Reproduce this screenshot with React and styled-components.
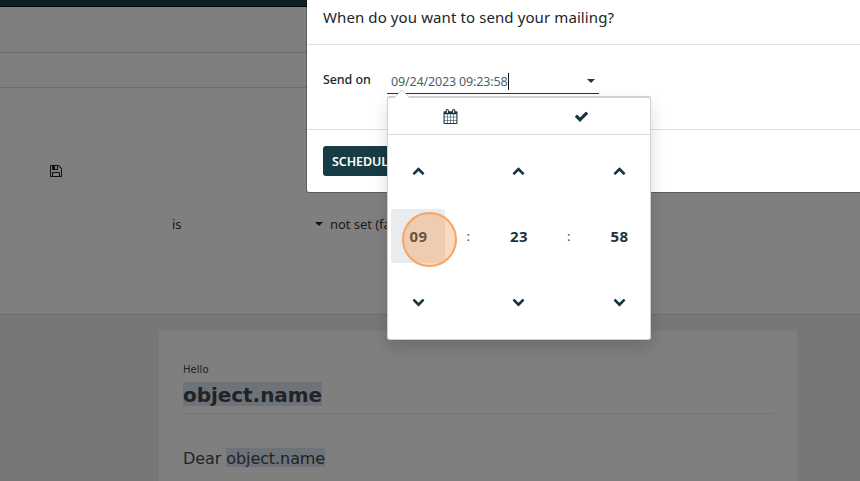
import React from "react";
import styled, { createGlobalStyle } from "styled-components";

const Global = createGlobalStyle`
  * { box-sizing: border-box; }
  body {
    margin: 0;
    overflow: hidden;
    background: #fff;
    font-family: "Noto Sans", "Open Sans", sans-serif;
    font-size: 13px;
    color: #1e262c;
  }
`;

const Stage = styled.div`
  position: relative;
  width: 860px;
  height: 481px;
  overflow: hidden;
`;

const Page = styled.div`
  display: flex;
  flex-direction: column;
  height: 481px;
`;

const Navbar = styled.header`
  flex: 0 0 7px;
  background: #1b4045;
  border-bottom: 1px solid #04080a;
`;

const Strip = styled.div`
  flex: 0 0 ${(p) => p.$height}px;
  border-bottom: 1px solid #dcdcde;
`;

const Form = styled.section`
  flex: 0 0 227px;
  padding-top: 76px;
  border-bottom: 1px solid #d8dadd;
`;

const SaveRow = styled.div`
  display: flex;
  height: 14px;
  padding-left: 49px;
`;

const RuleRow = styled.div`
  display: flex;
  align-items: center;
  height: 20px;
  margin-top: 36px;
  padding-left: 172px;
  letter-spacing: -0.05px;
  color: #343a40;
`;

const Operator = styled.span`
  width: 143px;
`;

const RuleValue = styled.span`
  margin-left: 7px;
  white-space: nowrap;
`;

const Caret = styled.span`
  border: 4px solid transparent;
  border-top: 4px solid ${(p) => p.$color};
  border-bottom: 0;
`;

const Canvas = styled.section`
  flex: 1;
  padding: 16px 63px 0 159px;
  background: #efefef;
`;

const Mail = styled.article`
  display: flex;
  flex-direction: column;
  height: 150px;
  padding: 31px 22px 0 24px;
  background: #fff;
  font-family: "DejaVu Sans", sans-serif;
  color: #454748;
`;

const Hello = styled.div`
  height: 20px;
  line-height: 15px;
  font-size: 10px;
  letter-spacing: 0.05px;
`;

const MailTitle = styled.div`
  height: 32px;
  border-bottom: 1px solid #ececec;
  font-size: 20px;
  font-weight: 700;
  line-height: 24px;
`;

const Token = styled.span`
  display: inline-block;
  height: ${(p) => p.$height}px;
  line-height: ${(p) => p.$height + 2}px;
  background: #dae6f2;
  letter-spacing: ${(p) => p.$spacing}px;
  vertical-align: top;
`;

const Greeting = styled.div`
  margin-top: 34px;
  font-size: 16px;
  line-height: 21px;
  letter-spacing: -0.08px;
  white-space: pre;
`;

const Backdrop = styled.div`
  position: absolute;
  inset: 0;
  background: rgba(0, 0, 0, 0.5);
`;

const Dialog = styled.div`
  position: absolute;
  top: 0;
  left: 306px;
  display: flex;
  flex-direction: column;
  width: 560px;
  height: 193px;
  overflow: hidden;
  background: #fff;
  background-clip: padding-box;
  border: 1px solid rgba(0, 0, 0, 0.25);
  border-top: 0;
  border-radius: 0 0 0 3px;
`;

const DialogHeader = styled.h4`
  flex: 0 0 45px;
  margin: 0;
  padding: 6px 16px 0;
  border-bottom: 1px solid #dee2e6;
  font-size: 15px;
  font-weight: 450;
  line-height: 22px;
  letter-spacing: 0.1px;
  color: #212529;
`;

const DialogBody = styled.div`
  display: flex;
  flex: 0 0 84px;
  padding: 24px 16px 0;
`;

const FieldLabel = styled.label`
  width: 64px;
  line-height: 21px;
  font-size: 12.5px;
  font-weight: 500;
  letter-spacing: -0.1px;
`;

const DateField = styled.div`
  display: flex;
  align-items: center;
  width: 212px;
  height: 25px;
  padding: 0 4px;
  border-bottom: 1px solid #1b3a44;
  color: #4b626c;
  font-size: 12.5px;
`;

const DateValue = styled.span`
  letter-spacing: -0.15px;
  white-space: nowrap;
`;

const Cursor = styled.span`
  width: 1px;
  height: 17px;
  margin-right: auto;
  background: #111;
`;

const DialogFooter = styled.div`
  flex: 1;
  padding: 16px;
  border-top: 1px solid #dee2e6;
`;

const Schedule = styled.button`
  width: 96px;
  height: 30px;
  padding: 0 9px;
  border: 0;
  border-radius: 3px;
  background: #173c45;
  color: #fff;
  font: 600 12.5px "Noto Sans", sans-serif;
  letter-spacing: -0.1px;
  text-align: left;
`;

const Picker = styled.div`
  position: absolute;
  top: 96px;
  left: 387px;
  width: 264px;
  height: 244px;
  background: #fff;
  border: 1px solid #ced1d4;
  border-top-width: 2px;
  border-radius: 3px;
  box-shadow: 0 8px 16px rgba(0, 0, 0, 0.15);
`;

const Arrow = styled.svg`
  position: absolute;
  top: -8px;
  left: 7px;
`;

const PickerTools = styled.div`
  display: grid;
  grid-template-columns: 125px 137px;
  align-items: center;
  justify-items: center;
  height: 37px;
  padding-top: 1px;
  border-bottom: 1px solid #d8dadd;
`;

const TimeGrid = styled.div`
  display: grid;
  grid-template-columns: 54px 46.5px 54px 46.5px 54px;
  grid-template-rows: repeat(3, 54px);
  row-gap: 11.5px;
  padding: 8px 0 0 3px;
`;

const Cell = styled.div`
  display: flex;
  align-items: center;
  justify-content: center;
  border-radius: 3px;
  background: ${(p) => (p.$active ? "#e9ecef" : "transparent")};
  padding-left: ${(p) => (p.$active === undefined ? 0 : 1)}px;
  font-size: ${(p) => (p.$plain ? 13 : 15)}px;
  letter-spacing: ${(p) => (p.$plain ? 0 : 0.3)}px;
  font-weight: ${(p) => (p.$plain ? 400 : 700)};
  color: ${(p) => (p.$plain ? "#495057" : "#173540")};
`;

const Highlight = styled.div`
  position: absolute;
  top: 212px;
  left: 402px;
  width: 55px;
  height: 55px;
  border: 2px solid #f8a462;
  border-radius: 50%;
  background: rgba(249, 145, 67, 0.35);
`;

const paths = {
  down: "M1683 808l-742 741q-19 19-45 19t-45-19l-742-741q-19-19-19-45.500t19-45.500l166-165q19-19 45-19t45 19l531 531 531-531q19-19 45-19t45 19l166 165q19 19 19 45.500t-19 45.500z",
  up: "M1683 1331l-166 165q-19 19-45 19t-45-19l-531-531-531 531q-19 19-45 19t-45-19l-166-165q-19-19-19-45.500t19-45.500l742-741q19-19 45-19t45 19l742 741q19 19 19 45.500t-19 45.500z",
  check:
    "M1671 566q0 40-28 68l-724 724-136 136q-28 28-68 28t-68-28l-136-136-362-362q-28-28-28-68t28-68l136-136q28-28 68-28t68 28l294 295 656-657q28-28 68-28t68 28l136 136q28 28 28 68z",
  calendar:
    "M192 1664h288v-288h-288v288zm352 0h320v-288h-320v288zm-352-352h288v-320h-288v320zm352 0h320v-320h-320v320zm-352-384h288v-288h-288v288zm736 736h320v-288h-320v288zm-384-736h320v-288h-320v288zm768 736h288v-288h-288v288zm-384-352h320v-320h-320v320zm-352-864v-288q0-13-9.500-22.500t-22.500-9.500h-64q-13 0-22.500 9.500t-9.500 22.500v288q0 13 9.500 22.500t22.500 9.500h64q13 0 22.500-9.500t9.500-22.500zm736 864h288v-320h-288v320zm-384-384h320v-288h-320v288zm384 0h288v-288h-288v288zm32-480v-288q0-13-9.500-22.500t-22.500-9.500h-64q-13 0-22.500 9.500t-9.500 22.500v288q0 13 9.500 22.500t22.500 9.500h64q13 0 22.500-9.500t9.500-22.500zm384-64v1280q0 52-38 90t-90 38h-1408q-52 0-90-38t-38-90v-1280q0-52 38-90t90-38h128v-96q0-66 47-113t113-47h64q66 0 113 47t47 113v96h384v-96q0-66 47-113t113-47h64q66 0 113 47t47 113v96h128q52 0 90 38t38 90z",
  floppy:
    "M512 1536h768v-384h-768v384zm896 0h128v-896q0-14-10-38.500t-20-34.500l-281-281q-10-10-34-20t-39-10v416q0 40-28 68t-68 28h-576q-40 0-68-28t-28-68v-416h-128v1280h128v-416q0-40 28-68t68-28h832q40 0 68 28t28 68v416zm-384-928v-320q0-13-9.500-22.500t-22.500-9.500h-192q-13 0-22.500 9.500t-9.500 22.500v320q0 13 9.500 22.500t22.500 9.500h192q13 0 22.500-9.500t9.500-22.500zm640 32v928q0 40-28 68t-68 28h-1344q-40 0-68-28t-28-68v-1344q0-40 28-68t68-28h928q40 0 88 20t76 48l280 280q28 28 48 76t20 88z",
};

const Icon = ({ name, size = 13, color = "#173540" }) => (
  <svg width={size} height={size} viewBox="0 0 1792 1792" fill={color}>
    <path d={paths[name]} />
  </svg>
);

const TimeRow = ({ items, plain }) =>
  items.map((item, i) => (
    <React.Fragment key={i}>
      {i > 0 && <Cell $plain>{plain ? ":" : ""}</Cell>}
      {item}
    </React.Fragment>
  ));

export default function App() {
  const arrows = (name) => [0, 1, 2].map((n) => (
    <Cell key={n}><Icon name={name} /></Cell>
  ));
  return (
    <Stage>
      <Global />
      <Page>
        <Navbar />
        <Strip $height={46} />
        <Strip $height={35} />
        <Form>
          <SaveRow><Icon name="floppy" size={14} color="#212529" /></SaveRow>
          <RuleRow>
            <Operator>is</Operator>
            <Caret $color="#212529" />
            <RuleValue>not set (false)</RuleValue>
          </RuleRow>
        </Form>
        <Canvas>
          <Mail>
            <Hello>Hello</Hello>
            <MailTitle><Token $height={24} $spacing={-0.05}>object.name</Token></MailTitle>
            <Greeting>Dear <Token $height={19} $spacing={-0.08}>object.name</Token></Greeting>
          </Mail>
        </Canvas>
      </Page>
      <Backdrop />
      <Dialog>
        <DialogHeader>When do you want to send your mailing?</DialogHeader>
        <DialogBody>
          <FieldLabel>Send on</FieldLabel>
          <DateField>
            <DateValue>09/24/2023 09:23:58</DateValue>
            <Cursor />
            <Caret $color="#173c45" />
          </DateField>
        </DialogBody>
        <DialogFooter><Schedule>SCHEDULE</Schedule></DialogFooter>
      </Dialog>
      <Picker>
        <Arrow width="14" height="8" viewBox="0 0 14 8">
          <path d="M0 7L7 0l7 7v1H0z" fill="#fff" />
          <path d="M0 7L7 0l7 7" fill="none" stroke="#ced1d4" />
        </Arrow>
        <PickerTools>
          <Icon name="calendar" size={15} />
          <Icon name="check" size={15} />
        </PickerTools>
        <TimeGrid>
          <TimeRow items={arrows("up")} />
          <TimeRow plain items={["09", "23", "58"].map((t, i) => <Cell key={t} $active={i === 0}>{t}</Cell>)} />
          <TimeRow items={arrows("down")} />
        </TimeGrid>
      </Picker>
      <Highlight />
    </Stage>
  );
}
